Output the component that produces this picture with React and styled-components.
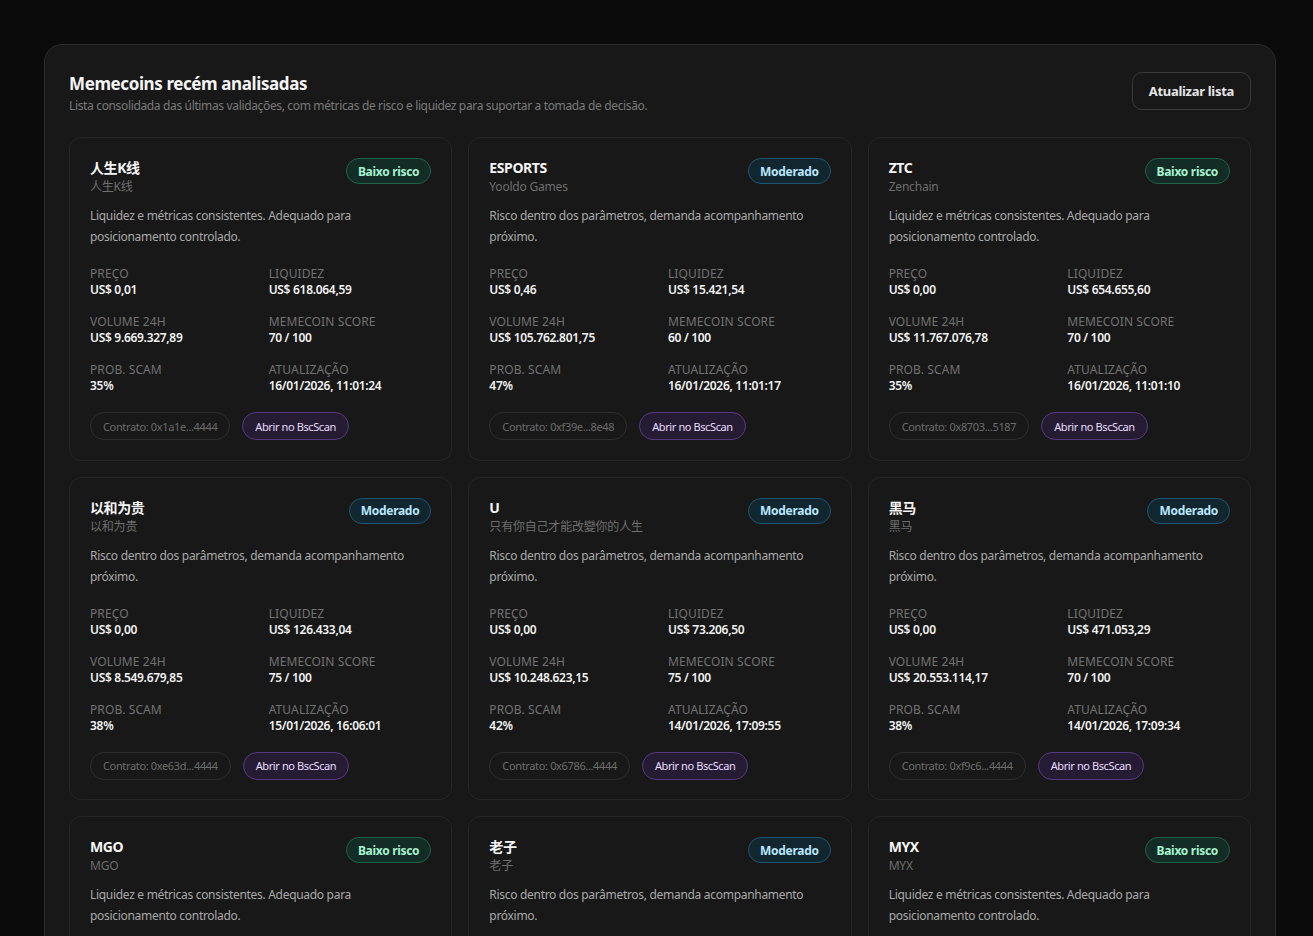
import React from "react";
import styled, { createGlobalStyle, css } from "styled-components";

const Global = createGlobalStyle`
  html, body { margin: 0; padding: 0; background: #0b0b0b; }
  body {
    font-family: "Noto Sans", "Noto Sans CJK SC", sans-serif;
    color: #f2f2f2;
    -webkit-font-smoothing: antialiased;
  }
  * { box-sizing: border-box; }
`;

const Page = styled.div`
  padding: 44px 0 0 44px;
`;

const Panel = styled.section`
  width: 1232px;
  background: #181818;
  border: 1px solid #2b2b2b;
  border-radius: 18px;
  padding: 24px;
`;

const Header = styled.header`
  display: flex;
  align-items: flex-start;
  justify-content: space-between;
  margin-bottom: 23px;
`;

const TitleBlock = styled.div`
  display: flex;
  flex-direction: column;
`;

const Title = styled.h1`
  margin: 0;
  font-size: 17px;
  line-height: 29px;
  font-weight: 700;
  color: #f4f4f4;
  letter-spacing: -0.4px;
`;

const Subtitle = styled.p`
  margin: 0;
  font-size: 12px;
  line-height: 16px;
  color: #7a7a7a;
  letter-spacing: -0.35px;
`;

const RefreshButton = styled.button`
  font-family: inherit;
  margin-top: 3px;
  height: 38px;
  padding: 0 16px;
  border-radius: 10px;
  border: 1px solid #3a3a3a;
  background: #181818;
  color: #e6e6e6;
  font-size: 13px;
  font-weight: 700;
  letter-spacing: -0.3px;
  cursor: pointer;
`;

const Grid = styled.div`
  display: grid;
  grid-template-columns: repeat(3, 1fr);
  gap: 16px;
`;

const Card = styled.article`
  background: #181818;
  border: 1px solid #262626;
  border-radius: 12px;
  padding: 20px 20px 19.5px;
  display: flex;
  flex-direction: column;
`;

const CardHead = styled.div`
  display: flex;
  justify-content: space-between;
  align-items: flex-start;
`;

const Names = styled.div`
  display: flex;
  flex-direction: column;
`;

const Symbol = styled.div`
  font-size: 14px;
  line-height: 20px;
  font-weight: 700;
  color: #f5f5f5;
  letter-spacing: -0.4px;
`;

const FullName = styled.div`
  font-size: 12px;
  line-height: 17px;
  color: #6e6e6e;
  letter-spacing: -0.2px;
`;

const badgeTones = {
  low: css`
    background: #132c25;
    border-color: #1f6248;
    color: #a7f3d0;
  `,
  mid: css`
    background: #11262f;
    border-color: #1e5670;
    color: #bae6fd;
  `,
};

const Badge = styled.span`
  display: inline-flex;
  align-items: center;
  height: 26px;
  padding: 0 11px;
  border-radius: 999px;
  border: 1px solid;
  font-size: 12px;
  font-weight: 700;
  letter-spacing: -0.3px;
  white-space: nowrap;
  ${(p) => badgeTones[p.$tone]}
`;

const Description = styled.p`
  margin: 10px 0 0;
  font-size: 12px;
  line-height: 21px;
  color: #a9a9a9;
  letter-spacing: -0.3px;
`;

const Metrics = styled.dl`
  margin: 19px 0 0;
  display: grid;
  grid-template-columns: 1fr 1fr;
  column-gap: 16px;
  row-gap: 16px;
`;

const Metric = styled.div`
  display: flex;
  flex-direction: column;
`;

const MetricLabel = styled.dt`
  font-size: 12px;
  line-height: 16px;
  color: #727272;
  text-transform: uppercase;
  letter-spacing: 0.1px;
`;

const MetricValue = styled.dd`
  margin: 0;
  font-size: 12px;
  line-height: 16px;
  font-weight: 600;
  color: #f2f2f2;
  letter-spacing: -0.3px;
`;

const Footer = styled.div`
  margin-top: 18px;
  display: flex;
  align-items: center;
  gap: 12px;
`;

const Pill = styled.span`
  display: inline-flex;
  align-items: center;
  height: 28px;
  padding: 0 12px;
  border-radius: 999px;
  border: 1px solid;
  font-size: 11px;
  white-space: nowrap;
  ${(p) =>
    p.$variant === "link"
      ? css`
          background: #251c33;
          border-color: #563a80;
          color: #eadcff;
          letter-spacing: -0.4px;
        `
      : css`
          background: transparent;
          border-color: #2e2e2e;
          color: #6c6c6c;
          letter-spacing: -0.35px;
        `}
`;

const DESC = {
  low: "Liquidez e métricas consistentes. Adequado para posicionamento controlado.",
  mid: "Risco dentro dos parâmetros, demanda acompanhamento próximo.",
};

const LABEL = { low: "Baixo risco", mid: "Moderado" };

const coins = [
  { sym: "人生K线", name: "人生K线", risk: "low", price: "US$ 0,01", liq: "US$ 618.064,59", vol: "US$ 9.669.327,89", score: "70 / 100", scam: "35%", upd: "16/01/2026, 11:01:24", contract: "0x1a1e...4444" },
  { sym: "ESPORTS", name: "Yooldo Games", risk: "mid", price: "US$ 0,46", liq: "US$ 15.421,54", vol: "US$ 105.762.801,75", score: "60 / 100", scam: "47%", upd: "16/01/2026, 11:01:17", contract: "0xf39e...8e48" },
  { sym: "ZTC", name: "Zenchain", risk: "low", price: "US$ 0,00", liq: "US$ 654.655,60", vol: "US$ 11.767.076,78", score: "70 / 100", scam: "35%", upd: "16/01/2026, 11:01:10", contract: "0x8703...5187" },
  { sym: "以和为贵", name: "以和为贵", risk: "mid", price: "US$ 0,00", liq: "US$ 126.433,04", vol: "US$ 8.549.679,85", score: "75 / 100", scam: "38%", upd: "15/01/2026, 16:06:01", contract: "0xe63d...4444" },
  { sym: "U", name: "只有你自己才能改變你的人生", risk: "mid", price: "US$ 0,00", liq: "US$ 73.206,50", vol: "US$ 10.248.623,15", score: "75 / 100", scam: "42%", upd: "14/01/2026, 17:09:55", contract: "0x6786...4444" },
  { sym: "黑马", name: "黑马", risk: "mid", price: "US$ 0,00", liq: "US$ 471.053,29", vol: "US$ 20.553.114,17", score: "70 / 100", scam: "38%", upd: "14/01/2026, 17:09:34", contract: "0xf9c6...4444" },
  { sym: "MGO", name: "MGO", risk: "low", price: "US$ 0,01", liq: "US$ 382.117,46", vol: "US$ 6.204.551,30", score: "70 / 100", scam: "34%", upd: "14/01/2026, 16:58:12", contract: "0x5e2b...4444" },
  { sym: "老子", name: "老子", risk: "mid", price: "US$ 0,00", liq: "US$ 98.340,72", vol: "US$ 4.871.209,66", score: "65 / 100", scam: "44%", upd: "14/01/2026, 16:51:40", contract: "0x93ad...4444" },
  { sym: "MYX", name: "MYX", risk: "low", price: "US$ 2,14", liq: "US$ 1.204.880,15", vol: "US$ 31.506.722,04", score: "75 / 100", scam: "31%", upd: "14/01/2026, 16:45:03", contract: "0x7a61...9c2e" },
];

function CoinCard({ c }) {
  const metrics = [
    ["Preço", c.price],
    ["Liquidez", c.liq],
    ["Volume 24h", c.vol],
    ["Memecoin score", c.score],
    ["Prob. scam", c.scam],
    ["Atualização", c.upd],
  ];
  return (
    <Card>
      <CardHead>
        <Names>
          <Symbol>{c.sym}</Symbol>
          <FullName>{c.name}</FullName>
        </Names>
        <Badge $tone={c.risk}>{LABEL[c.risk]}</Badge>
      </CardHead>
      <Description>{DESC[c.risk]}</Description>
      <Metrics>
        {metrics.map(([l, v]) => (
          <Metric key={l}>
            <MetricLabel>{l}</MetricLabel>
            <MetricValue>{v}</MetricValue>
          </Metric>
        ))}
      </Metrics>
      <Footer>
        <Pill>Contrato: {c.contract}</Pill>
        <Pill $variant="link">Abrir no BscScan</Pill>
      </Footer>
    </Card>
  );
}

export default function App() {
  return (
    <>
      <Global />
      <Page>
        <Panel>
          <Header>
            <TitleBlock>
              <Title>Memecoins recém analisadas</Title>
              <Subtitle>
                Lista consolidada das últimas validações, com métricas de risco e liquidez para suportar a tomada de decisão.
              </Subtitle>
            </TitleBlock>
            <RefreshButton>Atualizar lista</RefreshButton>
          </Header>
          <Grid>
            {coins.map((c) => (
              <CoinCard key={c.sym} c={c} />
            ))}
          </Grid>
        </Panel>
      </Page>
    </>
  );
}
